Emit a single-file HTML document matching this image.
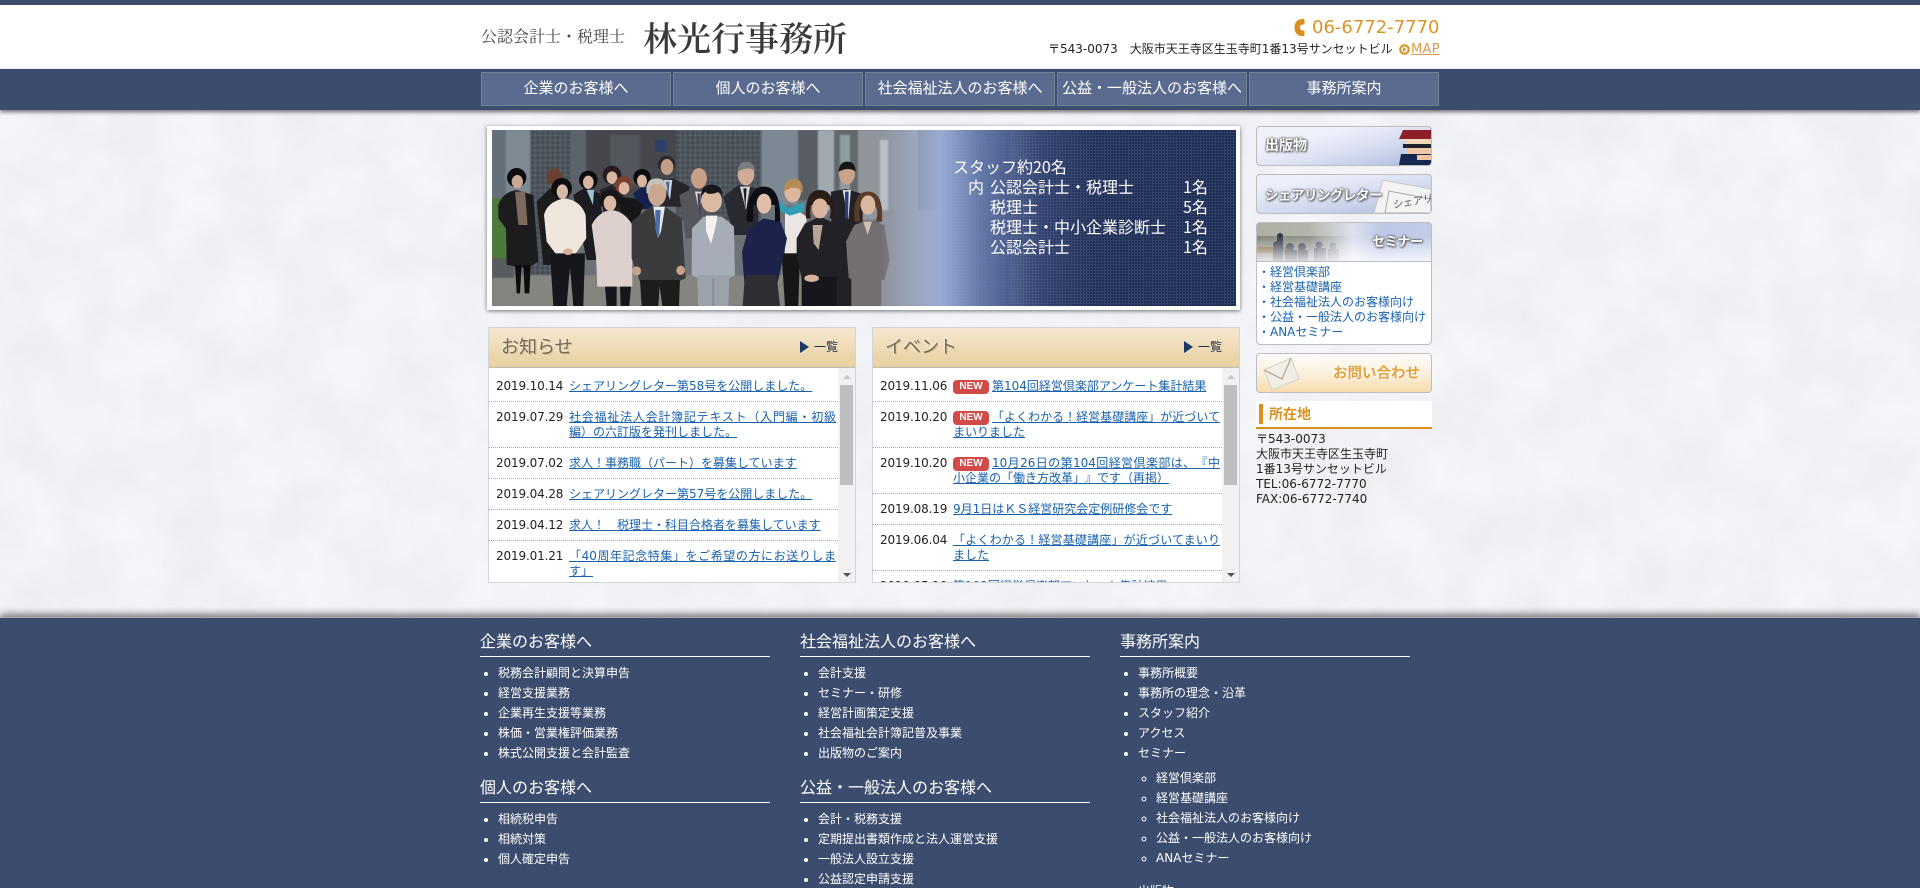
<!DOCTYPE html>
<html lang="ja">
<head>
<meta charset="utf-8">
<title>林光行事務所</title>
<style>
html,body{margin:0;padding:0;width:1920px;height:888px;overflow:hidden;background:#f1f2f6}
body{position:relative;font-family:"DejaVu Sans","Noto Sans CJK JP",sans-serif;font-size:12px;color:#222;text-spacing-trim:space-all}
.a{position:absolute;white-space:nowrap}
a{color:inherit}
#top{left:0;top:0;width:1920px;height:69px;background:#fff;border-top:5px solid #3c4c6e;box-sizing:border-box}
#navbg{left:0;top:69px;width:1920px;height:41px;background:#3c4c6e;box-shadow:0 2px 4px rgba(0,0,0,.55)}
.nav{position:absolute;top:72px;width:190px;height:34px;box-sizing:border-box;background:#5b6b90;border:1px solid #71838f;color:#fff;font-size:15px;line-height:29px;text-align:center;white-space:nowrap;overflow:hidden;font-family:"Noto Sans CJK JP",sans-serif}
.panel{position:absolute;top:327px;width:368px;height:256px;box-sizing:border-box;background:#fff;border:1px solid #d4d4d4;overflow:hidden}
.phead{position:absolute;left:-1px;top:-1px;width:368px;height:41px;box-sizing:border-box;border:1px solid #bcbcbc;background:linear-gradient(#f5e7cf,#e8cf9f)}
.phead b{position:absolute;left:12px;top:4px;font-weight:400;font-size:18px;line-height:28px;color:#75664f;text-shadow:0 0 3px #fff,1px 1px 1px #c9a871;font-family:"Noto Sans CJK JP",sans-serif}
.phead i{position:absolute;left:311px;top:13px;width:0;height:0;border-left:9px solid #173a6c;border-top:6px solid transparent;border-bottom:6px solid transparent}
.phead span{position:absolute;left:325px;top:11px;font-size:12px;line-height:16px;color:#222c48}
.list{position:absolute;left:0;top:43px;width:349px;margin:0;padding:0;list-style:none}
.list li{position:relative;padding:8px 2px 7px 80px;line-height:15px;border-bottom:1px dotted #aaa;text-align:justify;overflow:hidden}
.list li>span{position:absolute;left:7px;top:8px;letter-spacing:-.15px;color:#222}
.list a{color:#1a62ae;text-decoration:underline}
.new{display:inline-block;width:36px;height:14px;margin:0 3px 0 0;border-radius:4px;background:#d24a4a;color:#fff;font:bold 10px/13px "Liberation Sans",sans-serif;font-style:normal;text-align:center;vertical-align:1px;text-decoration:none}
.sb{position:absolute;left:349px;top:40px;width:18px;height:215px;background:#f1f1f1}
.sb u{position:absolute;left:2px;top:17px;width:13px;height:100px;background:#bebebe}
.sb s{position:absolute;left:5px;width:0;height:0;border-left:4px solid transparent;border-right:4px solid transparent}
.sb .up{top:7px;border-bottom:4px solid #c4c4c4}
.sb .dn{top:205px;border-top:4px solid #555}
.side{position:absolute;left:1256px;width:176px;box-sizing:border-box;border:1px solid #bdbdbd;border-radius:4px;overflow:hidden}
.ot{position:absolute;font-weight:700;color:#fff;white-space:nowrap;text-shadow:0 0 2px #555,0 0 2px #555,1px 1px 2px #666;font-family:"Noto Sans CJK JP",sans-serif}
#foot{left:0;top:617px;width:1920px;height:271px;background:#3c4c6e;box-shadow:0 -3px 7px rgba(0,0,0,.5);border-top:1px solid #aaa;box-sizing:border-box;overflow:hidden;white-space:normal;color:#fff}
.col{position:absolute;top:11px;width:290px}
.col h3{margin:0;height:24px;padding-bottom:3px;border-bottom:1px solid #fff;font-weight:400;font-size:16px;line-height:22px;white-space:nowrap;font-family:"Noto Sans CJK JP",sans-serif}
.col ul{margin:6px 0 12px;padding:0 0 0 18px;list-style:disc}
.col ul ul{margin:5px 0 13px;list-style:circle}
.col li{line-height:20px;font-size:12px;white-space:nowrap}
.bt{position:absolute;font:16px/20px 'Noto Sans CJK JP',sans-serif;color:#fff;white-space:nowrap}
</style>
</head>
<body>
<svg class="a" style="left:0;top:110px" width="1920" height="507">
<defs><filter id="tx" x="0" y="0" width="100%" height="100%" color-interpolation-filters="sRGB"><feTurbulence type="fractalNoise" baseFrequency=".018" numOctaves="4" seed="4"/><feColorMatrix values=".05 0 0 0 .92  .05 0 0 0 .925  .05 0 0 0 .94  0 0 0 0 1"/></filter></defs>
<rect width="1920" height="507" filter="url(#tx)"/>
</svg>

<div class="a" id="top"></div>
<div class="a" style="left:481px;top:25px;font:16px/22px 'Noto Serif CJK SC','Noto Serif CJK JP',serif;color:#444">公認会計士・税理士</div>
<div class="a" style="left:643px;top:15px;font:600 34px/44px 'Noto Serif CJK SC','Noto Serif CJK JP',serif;color:#3a3a3a">林光行事務所</div>
<svg class="a" style="left:1294px;top:19px" width="11" height="17" viewBox="0 0 11 17"><path d="M9.500 0H7C3 .5.500 4 .500 8.500S3 16.500 7 17h2.500c.6 0 1-.4 1-1v-3.500c0-.6-.4-1-1-1H8C6.800 11 6 10 6 8.500S6.800 6 8 5.500h1.500c.6 0 1-.4 1-1V1c0-.6-.4-1-1-1z" fill="#d9901c"/></svg>
<div class="a" style="left:1312px;top:16px;font-size:18px;line-height:24px;color:#dc9427">06-6772-7770</div>
<div class="a" style="left:1048px;top:41px;font-size:12px;line-height:16px;color:#222">〒543-0073　大阪市天王寺区生玉寺町1番13号サンセットビル</div>
<svg class="a" style="left:1399px;top:44px" width="11" height="11" viewBox="0 0 11 11"><circle cx="5.500" cy="5.500" r="4.200" fill="#fff" stroke="#dc9427" stroke-width="2.200"/><path d="M4 3l3.500 2.500L4 8z" fill="#dc9427"/></svg>
<a class="a" style="left:1411px;top:40px;font-size:13px;line-height:17px;color:#dc9a4a;text-decoration:underline;letter-spacing:.3px;padding-top:1px" href="#">MAP</a>

<div class="a" id="navbg"></div>
<div class="nav" style="left:481px">企業のお客様へ</div>
<div class="nav" style="left:673px">個人のお客様へ</div>
<div class="nav" style="left:865px">社会福祉法人のお客様へ</div>
<div class="nav" style="left:1057px">公益・一般法人のお客様へ</div>
<div class="nav" style="left:1249px">事務所案内</div>

<!-- banner -->
<div class="a" style="left:487px;top:126px;width:753px;height:184px;background:#fff;box-shadow:0 1px 4px rgba(0,0,0,.55)"></div>
<svg class="a" style="left:492px;top:130px" width="744" height="176" viewBox="492 130 744 176">
<defs>
<pattern id="gl" width="5" height="5" patternUnits="userSpaceOnUse"><rect width="5" height="5" fill="#454b53"/><path d="M0 0h5M0 0v5" stroke="#7a838c" stroke-width=".7"/></pattern>
<pattern id="gr" width="3" height="3" patternUnits="userSpaceOnUse"><path d="M0 .5h3M.5 0v3" stroke="#fff" stroke-opacity=".09" stroke-width="1"/></pattern>
<linearGradient id="fade" x1="0" x2="1"><stop offset="0" stop-color="#a0b0d4" stop-opacity="0"/><stop offset=".1" stop-color="#a3b3d8" stop-opacity=".6"/><stop offset=".17" stop-color="#99abd4"/><stop offset=".28" stop-color="#6478a8"/><stop offset=".45" stop-color="#2f3f6d"/><stop offset=".6" stop-color="#1f2e58"/><stop offset="1" stop-color="#1c2b55"/></linearGradient>
<filter id="bl"><feGaussianBlur stdDeviation=".7"/></filter>
</defs>
<rect x="492" y="130" width="744" height="176" fill="#6d7278"/>
<g filter="url(#bl)">
<rect x="492" y="130" width="14" height="115" fill="#63707a"/>
<rect x="506" y="130" width="34" height="120" fill="#7d8a93"/>
<rect x="530" y="130" width="40" height="145" fill="url(#gl)"/>
<rect x="570" y="130" width="16" height="100" fill="#5d646c"/>
<rect x="586" y="130" width="100" height="70" fill="#44474d"/>
<rect x="610" y="135" width="30" height="50" fill="#52565b"/>
<rect x="655" y="140" width="12" height="12" fill="#2e3f68"/>
<rect x="676" y="130" width="85" height="90" fill="url(#gl)"/>
<rect x="762" y="130" width="36" height="75" fill="#7b8994"/>
<rect x="798" y="130" width="20" height="70" fill="#585d64"/>
<rect x="818" y="130" width="16" height="80" fill="#9fa9ae"/>
<rect x="834" y="130" width="24" height="70" fill="#63676c"/>
<rect x="840" y="135" width="10" height="55" fill="#8f9ca2"/>
<rect x="858" y="130" width="60" height="90" fill="#90959b"/>
<rect x="880" y="140" width="8" height="70" fill="#b9bfc3"/>
<rect x="492" y="275" width="500" height="31" fill="#85847f"/>
<rect x="880" y="210" width="60" height="96" fill="#8f9298"/>
<rect x="492" y="198" width="15" height="60" fill="#4e7a38"/>
<rect x="492" y="258" width="22" height="20" fill="#585c5e"/>
</g>
<g transform="translate(490 125) scale(.3333)" filter="url(#bl)">
<!-- back row -->
<path d="M25 240Q40 200 80 195L130 210 145 410 110 430 50 420 48 310 25 280z" fill="#1a1a1c"/>
<path d="M75 420h20l-5 85H80zM100 420h22l-4 85h-14z" fill="#111"/>
<path d="M75 200l30 0 8 100H85z" fill="#7c6a5e"/>
<circle cx="80" cy="158" r="29" fill="#0e0e10"/><ellipse cx="82" cy="170" rx="17" ry="20" fill="#c9a897"/>
<path d="M140 230l40-40 40 30 0 200H160z" fill="#1b1b1e"/><circle cx="193" cy="155" r="24" fill="#6a3f33"/>
<path d="M250 210l30-20 50 15 20 200H290z" fill="#1c1c20"/><circle cx="295" cy="165" r="28" fill="#0e0e10"/><ellipse cx="295" cy="172" rx="16" ry="20" fill="#d7b5a5"/><path d="M290 195h22l-3 45z" fill="#9cc8d6"/>
<path d="M330 195l35-15 35 20v60H340z" fill="#232328"/><circle cx="366" cy="150" r="28" fill="#2b1d1b"/><ellipse cx="366" cy="158" rx="16" ry="19" fill="#d8b6a2"/>
<path d="M430 205l25-20 40 15-10 50-40 5z" fill="#14214d"/><circle cx="456" cy="158" r="26" fill="#111"/><ellipse cx="456" cy="168" rx="15" ry="19" fill="#d9b6a2"/>
<path d="M390 215l40 5 30 20-20 60-50 0z" fill="#161618"/><circle cx="400" cy="180" r="26" fill="#7c3d2a"/><ellipse cx="402" cy="190" rx="16" ry="19" fill="#dcb7a0"/>
<path d="M505 170l45-10 50 25-20 60h-70z" fill="#28282c"/><path d="M522 165h25l-7 60z" fill="#c9d1e0"/><path d="M528 170h10l-3 50z" fill="#4a6595"/><circle cx="530" cy="118" r="26" fill="#2c2a2a"/><ellipse cx="531" cy="126" rx="19" ry="24" fill="#c49f88"/>
<path d="M568 210l40-20 40 10 20 100-40 40-40 0z" fill="#55565c"/><path d="M615 200h25l-12 60z" fill="#dcdde2"/><path d="M622 205h10l0 60-5 5z" fill="#4a3c55"/><ellipse cx="627" cy="160" rx="24" ry="31" fill="#c89f85"/>
<path d="M700 215l45-35 60 10 0 120-25 20H730z" fill="#2c2c30"/><path d="M750 185h30l-12 70z" fill="#d8dadf"/><path d="M760 190h10l-4 60z" fill="#1d1d22"/><ellipse cx="768" cy="148" rx="25" ry="33" fill="#d0ac96"/><path d="M743 140q2-30 26-30t26 30q-15-20-52 0z" fill="#7b7b7e"/>
<path d="M885 255l35 0 30 20-5 110-60 0z" fill="#e9e6e4"/><path d="M875 385h55l-5 158h-40z" fill="#151517"/><path d="M865 225l30 25 50-20-5 30-40 12-30-15z" fill="#30a0b4"/><ellipse cx="908" cy="200" rx="25" ry="32" fill="#dcb79e"/><path d="M882 200q0-38 30-38t26 42q-20-30-56-4z" fill="#b68a55"/>
<path d="M1023 200l45-8 50 15 0 340h-90z" fill="#222226"/><path d="M1058 195h25l-8 90z" fill="#d9dde4"/><path d="M1065 200h11l-2 80-8 0z" fill="#27427c"/><ellipse cx="1071" cy="146" rx="24" ry="32" fill="#c9a28a"/><path d="M1046 140q2-30 26-30t25 30q-20-16-51 0z" fill="#141414"/>
<!-- front -->
<path d="M162 270q10-40 60-50 50 5 65 50l2 70-35 50H200l-30-40z" fill="#efe6dd"/>
<path d="M180 385h105l-5 158h-30l-10-120-10 120h-40z" fill="#17171a"/>
<circle cx="215" cy="190" r="31" fill="#111"/><ellipse cx="217" cy="200" rx="17" ry="22" fill="#dbb9a6"/>
<ellipse cx="234" cy="380" rx="14" ry="10" fill="#d8b09a"/>
<path d="M305 300q20-40 60-45 40 5 62 45l0 185H322l-4-90z" fill="#ddd0cd"/>
<path d="M345 485h35v58h-30zM390 485h33l-5 58h-26z" fill="#17171a"/>
<circle cx="360" cy="225" r="31" fill="#141414"/><ellipse cx="360" cy="235" rx="19" ry="23" fill="#dcb9a3"/>
<path d="M425 290l55-45 45 0 50 35 12 180-25 10H450l-25-70z" fill="#3a3a3d"/>
<path d="M490 245h35l-12 75-10 20z" fill="#e6e8ee"/><path d="M496 255h16l-4 70-5 15-7-30z" fill="#4a6da4"/>
<path d="M450 465h120l-3 78h-50l-8-60-4 60h-50z" fill="#1c1c1f"/>
<ellipse cx="501" cy="205" rx="28" ry="38" fill="#cba991"/><path d="M470 205q-5-45 30-45t32 45q-5-25-30-28t-26 28z" fill="#c5c3be"/>
<ellipse cx="440" cy="438" rx="13" ry="14" fill="#c9a28a"/><ellipse cx="572" cy="436" rx="13" ry="14" fill="#c9a28a"/>
<path d="M606 310l35-35 55 0 36 30 3 145-20 10H625l-20-10z" fill="#a7adb6"/>
<path d="M648 272h35l-10 50-10 35-15-40z" fill="#f4f2ef"/>
<path d="M622 450h96l-3 93h-90z" fill="#9ca2ab"/><path d="M668 460h3v83h-3z" fill="#777d86"/>
<ellipse cx="665" cy="228" rx="31" ry="34" fill="#dcb9a1"/><path d="M634 225q-6-46 31-46t32 46q0-20-12-24-30 12-40-2-10 8-11 26z" fill="#15151a"/>
<path d="M756 380l20-70 45-30 50 10 20 50-25 120-5 20-25 30h-70z" fill="#1c2449"/>
<path d="M765 450h95l10 93h-112z" fill="#2d2d33"/>
<path d="M770 290q0-105 52-105t48 105l-15 0V240h-65v50z" fill="#0f0f12"/><ellipse cx="822" cy="236" rx="22" ry="30" fill="#e0beaa"/>
<path d="M920 340l25-45 45-20 45 20 15 110-15 55H935l-15-70z" fill="#232327"/>
<path d="M968 300h30l-12 75-15-20z" fill="#b5a697"/>
<path d="M935 455h105v88H935z" fill="#18181b"/><ellipse cx="965" cy="460" rx="22" ry="11" fill="#d8b39c"/>
<path d="M948 280q-5-85 42-85t40 85l-12 0q8-20 0-40h-55q-5 20 0 40z" fill="#2a1a18"/><ellipse cx="990" cy="250" rx="24" ry="30" fill="#dbb59f"/>
<path d="M1068 350l25-50 40-15 50 15 16 105-15 60-10 0 0 78h-90l0-80-8-5z" fill="#726e72"/>
<path d="M1120 290h26l-13 40z" fill="#d2bfae"/>
<path d="M1094 290q-8-90 40-90t42 90l-18 0q8-30 0-45h-46q-8 18 0 45z" fill="#5a3a2a"/><ellipse cx="1134" cy="240" rx="22" ry="29" fill="#dcb7a0"/>
</g>
<rect x="880" y="130" width="356" height="176" fill="url(#fade)"/>
<rect x="1010" y="130" width="226" height="176" fill="url(#gr)"/>
<rect x="950" y="130" width="60" height="176" fill="url(#gr)" opacity=".3"/>
</svg>
<div class="bt" style="left:953px;top:156px">スタッフ約20名</div>
<div class="bt" style="left:968px;top:176px">内</div>
<div class="bt" style="left:990px;top:176px">公認会計士・税理士</div>
<div class="bt" style="left:990px;top:196px">税理士</div>
<div class="bt" style="left:990px;top:216px">税理士・中小企業診断士</div>
<div class="bt" style="left:990px;top:236px">公認会計士</div>
<div class="bt" style="left:1183px;top:176px">1名</div>
<div class="bt" style="left:1183px;top:196px">5名</div>
<div class="bt" style="left:1183px;top:216px">1名</div>
<div class="bt" style="left:1183px;top:236px">1名</div>

<!-- news -->
<div class="panel" style="left:488px">
<div class="phead"><b>お知らせ</b><i></i><span>一覧</span></div>
<ul class="list">
<li><span>2019.10.14</span><a href="#">シェアリングレター第58号を公開しました。</a></li>
<li><span>2019.07.29</span><a href="#">社会福祉法人会計簿記テキスト（入門編・初級編）の六訂版を発刊しました。</a></li>
<li><span>2019.07.02</span><a href="#">求人！事務職（パート）を募集しています</a></li>
<li><span>2019.04.28</span><a href="#">シェアリングレター第57号を公開しました。</a></li>
<li><span>2019.04.12</span><a href="#">求人！　税理士・科目合格者を募集しています</a></li>
<li><span>2019.01.21</span><a href="#">「40周年記念特集」をご希望の方にお送りします」</a></li>
</ul>
<div class="sb"><s class="up"></s><u></u><s class="dn"></s></div>
</div>
<div class="panel" style="left:872px">
<div class="phead"><b>イベント</b><i></i><span>一覧</span></div>
<ul class="list">
<li><span>2019.11.06</span><em class="new">NEW</em><a href="#">第104回経営倶楽部アンケート集計結果</a></li>
<li><span>2019.10.20</span><em class="new">NEW</em><a href="#">「よくわかる！経営基礎講座」が近づいてまいりました</a></li>
<li><span>2019.10.20</span><em class="new">NEW</em><a href="#">10月26日の第104回経営倶楽部は、『中小企業の「働き方改革」』です（再掲）</a></li>
<li><span>2019.08.19</span><a href="#">9月1日はＫＳ経営研究会定例研修会です</a></li>
<li><span>2019.06.04</span><a href="#">「よくわかる！経営基礎講座」が近づいてまいりました</a></li>
<li><span>2019.05.10</span><a href="#">第103回経営倶楽部アンケート集計結果</a></li>
</ul>
<div class="sb"><s class="up"></s><u></u><s class="dn"></s></div>
</div>

<!-- sidebar -->
<div class="side" style="top:126px;height:40px;background:linear-gradient(165deg,#eef0fa 30%,#d7ddf1 60%,#aab9dd)">
<div class="ot" style="left:8px;top:8px;font-size:14px;line-height:20px">出版物</div>
<svg style="position:absolute;left:140px;top:0" width="34" height="38"><path d="M6 3h28v9H2z" fill="#8c1f2a"/><path d="M8 12h26v5H8z" fill="#f1d6b8"/><path d="M6 17h28v4H6z" fill="#20222c"/><path d="M10 21h24v6H10z" fill="#f2c7a5"/><path d="M4 27h30v11H2z" fill="#16284f"/><path d="M20 28h14v5H20z" fill="#efc5a5"/></svg>
</div>
<div class="side" style="top:174px;height:40px;background:linear-gradient(170deg,#eceff9 20%,#d2d9ef 60%,#abb9dc)">
<svg style="position:absolute;left:116px;top:0" width="58" height="38"><path d="M10 5l48 9v24H1z" fill="#f3f3f3" stroke="#c9c9c9"/><path d="M16 16l42 8v14H12z" fill="none" stroke="#aaa"/></svg>
<div class="ot" style="left:8px;top:9px;font-size:13.500px;line-height:20px;letter-spacing:-.5px">シェアリングレター</div>
<div class="a" style="left:136px;top:20px;font-size:10px;line-height:14px;color:#555;transform:rotate(-10deg) skewX(-8deg)">シェアリン</div>
</div>
<div class="side" style="top:222px;height:123px;background:#fff">
<svg style="position:absolute;left:0;top:0" width="174" height="38"><defs><linearGradient id="s2" x1="0" x2="1"><stop offset="0" stop-color="#dfe3ee" stop-opacity="0"/><stop offset=".3" stop-color="#dfe3ee" stop-opacity=".1"/><stop offset=".55" stop-color="#dde1ee"/><stop offset=".72" stop-color="#bcc8e5"/><stop offset="1" stop-color="#c2cce8"/></linearGradient><linearGradient id="s3" x1="0" y1="0" x2="0" y2="1"><stop offset=".35" stop-color="#fff" stop-opacity="0"/><stop offset="1" stop-color="#fff" stop-opacity=".8"/></linearGradient></defs>
<rect width="174" height="38" fill="#85877e"/>
<rect x="0" y="0" width="100" height="13" fill="#aeb0a4"/>
<rect x="0" y="24" width="30" height="6" fill="#7a5b39"/>
<g fill="#2a3040"><circle cx="20" cy="22" r="4"/><rect x="16" y="25" width="10" height="13"/><circle cx="33" cy="24" r="4"/><rect x="28" y="27" width="12" height="11"/><circle cx="45" cy="24" r="4"/><rect x="41" y="27" width="10" height="11"/><circle cx="62" cy="22" r="3.500"/><rect x="57" y="25" width="12" height="13"/><circle cx="76" cy="23" r="3.500"/><rect x="71" y="26" width="11" height="12"/><rect x="20" y="15" width="6" height="10"/><circle cx="23" cy="13" r="3"/></g>
<rect width="174" height="38" fill="url(#s2)"/>
<rect width="174" height="38" fill="url(#s3)"/>
</svg>
<div class="ot" style="left:115px;top:8px;font-size:13px;line-height:20px;letter-spacing:-.3px">セミナー</div>
<div style="position:absolute;left:0;top:38px;width:174px;border-top:1px solid #bdbdbd"></div>
<div style="position:absolute;left:1px;top:42px;color:#1a62ae;font-size:12px;line-height:15px;white-space:nowrap">・経営倶楽部<br>・経営基礎講座<br>・社会福祉法人のお客様向け<br>・公益・一般法人のお客様向け<br>・ANAセミナー</div>
</div>
<div class="side" style="top:353px;height:40px;background:linear-gradient(#fdfdfc,#fbefd9 55%,#f8dcae)">
<svg style="position:absolute;left:5px;top:1px" width="40" height="38"><path d="M2 15L29 3l8 21-27 11z" fill="#f0eee6" stroke="#d6d3c6"/><path d="M2 15l18 9 9-21" fill="none" stroke="#b9b29c" stroke-width="1.500"/></svg>
<div class="ot" style="left:76px;top:8px;font-size:14.500px;line-height:22px;color:#e4a03c;text-shadow:0 0 2px #fff,0 0 3px #fff">お問い合わせ</div>
</div>
<div class="a" style="left:1256px;top:401px;width:176px;height:26px;background:#fff;border-bottom:2px solid #d9901c"></div>
<div class="a" style="left:1259px;top:404px;width:4px;height:20px;background:#d9901c"></div>
<div class="a" style="left:1269px;top:405px;font-size:14px;line-height:18px;font-weight:700;color:#d9901c;font-family:'Noto Sans CJK JP',sans-serif">所在地</div>
<div class="a" style="left:1256px;top:432px;font-size:12px;line-height:15px;color:#222">〒543-0073<br>大阪市天王寺区生玉寺町<br>1番13号サンセットビル<br>TEL:06-6772-7770<br>FAX:06-6772-7740</div>

<!-- footer -->
<div class="a" id="foot">
<div class="col" style="left:480px">
<h3>企業のお客様へ</h3>
<ul><li>税務会計顧問と決算申告</li><li>経営支援業務</li><li>企業再生支援等業務</li><li>株価・営業権評価業務</li><li>株式公開支援と会計監査</li></ul>
<h3>個人のお客様へ</h3>
<ul><li>相続税申告</li><li>相続対策</li><li>個人確定申告</li></ul>
</div>
<div class="col" style="left:800px">
<h3>社会福祉法人のお客様へ</h3>
<ul><li>会計支援</li><li>セミナー・研修</li><li>経営計画策定支援</li><li>社会福祉会計簿記普及事業</li><li>出版物のご案内</li></ul>
<h3>公益・一般法人のお客様へ</h3>
<ul><li>会計・税務支援</li><li>定期提出書類作成と法人運営支援</li><li>一般法人設立支援</li><li>公益認定申請支援</li></ul>
</div>
<div class="col" style="left:1120px">
<h3>事務所案内</h3>
<ul><li>事務所概要</li><li>事務所の理念・沿革</li><li>スタッフ紹介</li><li>アクセス</li><li>セミナー
<ul><li>経営倶楽部</li><li>経営基礎講座</li><li>社会福祉法人のお客様向け</li><li>公益・一般法人のお客様向け</li><li>ANAセミナー</li></ul></li><li>出版物</li></ul>
</div>
</div>
</body>
</html>
